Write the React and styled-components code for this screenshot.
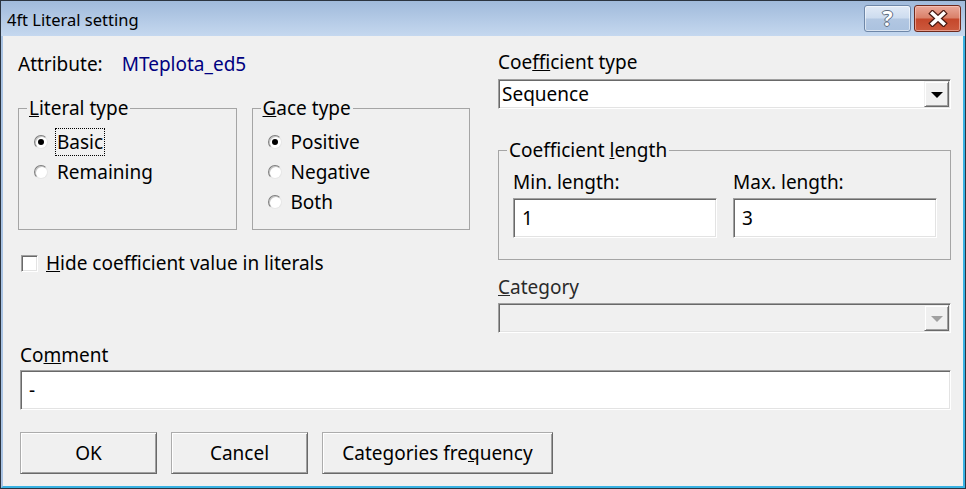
import React from "react";
import styled, { createGlobalStyle, css } from "styled-components";

const FONT = `"Noto Sans", "Open Sans", "DejaVu Sans", sans-serif`;

const Global = createGlobalStyle`
  html, body { margin: 0; padding: 0; background: #ffffff; }
  * { box-sizing: border-box; }
`;

const sunken = css`
  border: 1px solid;
  border-color: #a0a0a0 #ffffff #ffffff #a0a0a0;
  box-shadow: inset 1px 1px 0 #696969, inset -1px -1px 0 #e3e3e3;
`;

const raised = css`
  border: 1px solid;
  border-color: #acacac #696969 #696969 #acacac;
  box-shadow: inset 1px 1px 0 #ffffff, inset -1px -1px 0 #a0a0a0;
`;

const Window = styled.div`
  width: 966px;
  height: 489px;
  border: 1px solid #2b3440;
  display: flex;
  flex-direction: column;
  font-family: ${FONT};
  font-size: 19px;
  color: #000;
  overflow: hidden;
`;

const TitleBar = styled.div`
  height: 35px;
  flex: none;
  display: flex;
  align-items: flex-start;
  padding: 0 4px 0 6px;
  background: linear-gradient(#a0badb, #c5d8ef);
`;

const TitleText = styled.div`
  font-size: 16.5px;
  line-height: 24px;
  margin-top: 7px;
`;

const Caps = styled.div`
  margin-left: auto;
  margin-top: 4px;
  display: flex;
  gap: 3px;
`;

const CapButton = styled.div`
  width: 47px;
  height: 27px;
  border-radius: 3px;
  display: flex;
  align-items: center;
  justify-content: center;
  ${(p) =>
    p.$close
      ? css`
          border: 1px solid #6e2a1d;
          background: linear-gradient(#eaa899, #d98069 48%, #c5472b 52%, #cc5a3e);
          box-shadow: inset 0 0 0 1px rgba(255, 210, 200, 0.55);
        `
      : css`
          border: 1px solid #6e87a8;
          background: linear-gradient(#e1eaf6, #cddcef 48%, #b2c7e2 52%, #abc2df);
          box-shadow: inset 0 0 0 1px rgba(255, 255, 255, 0.55);
        `}
`;

const HelpGlyph = styled.span`
  font-family: ${FONT};
  font-weight: 700;
  font-size: 21px;
  line-height: 1;
  color: #ffffff;
  text-shadow: -1px 0 #5d6b7e, 1px 0 #5d6b7e, 0 -1px #5d6b7e, 0 1px #5d6b7e;
`;

const Frame = styled.div`
  flex: 1;
  min-height: 0;
  display: flex;
  border-left: 2px solid #a9c3e3;
  border-right: 2px solid #39b2e3;
  border-bottom: 2px solid #39b2e3;
`;

const Body = styled.div`
  flex: 1;
  background: #f0f0f0;
  padding: 14px 12px 0 15px;
  display: flex;
  flex-direction: column;
`;

const Top = styled.div`
  display: grid;
  grid-template-columns: 452px 1fr;
  column-gap: 28px;
  align-items: start;
`;

const Column = styled.div`
  display: flex;
  flex-direction: column;
`;

const AttrRow = styled.div`
  margin-top: 2px;
  display: flex;
  gap: 19px;
  line-height: 24px;
`;

const AttrValue = styled.span`
  color: #000080;
`;

const GroupRow = styled.div`
  margin-top: 20px;
  display: grid;
  grid-template-columns: 1fr 1fr;
  column-gap: 15px;
`;

const Group = styled.fieldset`
  margin: ${(p) => p.$mt || 0}px 0 0 0;
  min-width: 0;
  height: ${(p) => p.$h}px;
  border: 1px solid #a5a5a5;
  padding: ${(p) => p.$pt}px ${(p) => p.$pr || 0}px 0 8px;
`;

const Legend = styled.legend`
  padding: 0 2px;
  line-height: 24px;
`;

const RadioList = styled.div`
  display: flex;
  flex-direction: column;
  padding-left: 7px;
`;

const RadioRow = styled.div`
  height: 30px;
  display: flex;
  align-items: center;
  gap: 9px;
`;

const RadioMark = styled.span`
  width: 14px;
  height: 14px;
  flex: none;
  border-radius: 50%;
  background: #fff;
  border: 1px solid;
  border-color: #7e7e7e #e6e6e6 #e6e6e6 #7e7e7e;
  box-shadow: inset 1px 1px 0 #c4c4c4;
  display: flex;
  align-items: center;
  justify-content: center;
  &::after {
    content: "";
    width: 6px;
    height: 6px;
    border-radius: 50%;
    background: #000;
    display: ${(p) => (p.$on ? "block" : "none")};
  }
`;

const RadioLabel = styled.span`
  line-height: 26px;
  padding: 0 1px;
  margin-left: -1px;
  outline: ${(p) => (p.$focus ? "1px dotted #000" : "none")};
`;

const CheckRow = styled.div`
  margin-top: 21px;
  height: 24px;
  display: flex;
  align-items: center;
  gap: 8px;
  line-height: 24px;
`;

const CheckBox = styled.span`
  width: 17px;
  height: 17px;
  margin-left: 3px;
  background: #fff;
  ${sunken};
`;

const Label = styled.div`
  line-height: 24px;
  margin-top: ${(p) => p.$mt || 0}px;
  margin-left: ${(p) => p.$ml || 0}px;
  color: ${(p) => (p.$dim ? "#2a2a2a" : "#000")};
`;

const Select = styled.div`
  margin-top: ${(p) => p.$mt}px;
  height: 30px;
  display: flex;
  align-items: stretch;
  padding: 1px 1px 1px 3px;
  background: ${(p) => (p.$disabled ? "#f0f0f0" : "#ffffff")};
  ${sunken};
`;

const SelectText = styled.span`
  flex: 1;
  line-height: 26px;
`;

const DropButton = styled.span`
  width: 25px;
  flex: none;
  background: #f0f0f0;
  display: flex;
  align-items: center;
  justify-content: center;
  ${raised};
  border-color: #f0f0f0 #696969 #696969 #f0f0f0;
`;

const Arrow = styled.span`
  width: 0;
  height: 0;
  border-left: 6px solid transparent;
  border-right: 6px solid transparent;
  border-top: 6px solid ${(p) => (p.$disabled ? "#a0a0a0" : "#000")};
  margin-top: 1px;
`;

const LengthGrid = styled.div`
  display: grid;
  grid-template-columns: 1fr 1fr;
  column-gap: 16px;
  padding-left: 6px;
`;

const TextBox = styled.div`
  margin-top: ${(p) => p.$mt || 0}px;
  margin-left: ${(p) => p.$ml || 0}px;
  height: 40px;
  background: #ffffff;
  padding: 0 8px;
  display: flex;
  align-items: center;
  line-height: 24px;
  ${sunken};
`;

const ButtonRow = styled.div`
  margin-top: 22px;
  margin-left: 2px;
  display: flex;
  gap: 14px;
`;

const Button = styled.div`
  width: ${(p) => p.$w}px;
  height: 42px;
  background: #f0f0f0;
  display: flex;
  align-items: center;
  justify-content: center;
  line-height: 24px;
  ${raised};
`;

function Radio({ on, focus, children }) {
  return (
    <RadioRow>
      <RadioMark $on={on} />
      <RadioLabel $focus={focus}>{children}</RadioLabel>
    </RadioRow>
  );
}

function Combo({ mt, disabled, children }) {
  return (
    <Select $mt={mt} $disabled={disabled}>
      <SelectText>{children}</SelectText>
      <DropButton>
        <Arrow $disabled={disabled} />
      </DropButton>
    </Select>
  );
}

export default function App() {
  return (
    <>
      <Global />
      <Window>
        <TitleBar>
          <TitleText>4ft Literal setting</TitleText>
          <Caps>
            <CapButton>
              <HelpGlyph>?</HelpGlyph>
            </CapButton>
            <CapButton $close>
              <svg width="20" height="17" viewBox="0 0 20 17">
                <path d="M4.5 3.5 L15.5 13.5 M15.5 3.5 L4.5 13.5" stroke="#4a1a12" strokeWidth="6" strokeLinecap="square" />
                <path d="M4.5 3.5 L15.5 13.5 M15.5 3.5 L4.5 13.5" stroke="#ffffff" strokeWidth="3.6" strokeLinecap="square" />
              </svg>
            </CapButton>
          </Caps>
        </TitleBar>
        <Frame>
          <Body>
            <Top>
              <Column>
                <AttrRow>
                  <span>Attribute:</span>
                  <AttrValue>MTeplota_ed5</AttrValue>
                </AttrRow>
                <GroupRow>
                  <Group $h={134} $pt={7}>
                    <Legend>
                      <u>L</u>iteral type
                    </Legend>
                    <RadioList>
                      <Radio on focus>Basic</Radio>
                      <Radio>Remaining</Radio>
                    </RadioList>
                  </Group>
                  <Group $h={134} $pt={7}>
                    <Legend>
                      <u>G</u>ace type
                    </Legend>
                    <RadioList>
                      <Radio on>Positive</Radio>
                      <Radio>Negative</Radio>
                      <Radio>Both</Radio>
                    </RadioList>
                  </Group>
                </GroupRow>
                <CheckRow>
                  <CheckBox />
                  <span>
                    <u>H</u>ide coefficient value in literals
                  </span>
                </CheckRow>
              </Column>
              <Column>
                <Label>
                  Coe<u>f</u>ficient type
                </Label>
                <Combo mt={5}>Sequence</Combo>
                <Group $mt={29} $h={122} $pt={8} $pr={13}>
                  <Legend>
                    Coefficient <u>l</u>ength
                  </Legend>
                  <LengthGrid>
                    <div>
                      <Label>Min. length:</Label>
                      <TextBox $mt={4}>1</TextBox>
                    </div>
                    <div>
                      <Label>Max. length:</Label>
                      <TextBox $mt={4}>3</TextBox>
                    </div>
                  </LengthGrid>
                </Group>
                <Label $mt={15} $dim>
                  <u>C</u>ategory
                </Label>
                <Combo mt={4} disabled />
              </Column>
            </Top>
            <Label $mt={10} $ml={2}>
              Co<u>m</u>ment
            </Label>
            <TextBox $mt={3} $ml={2}>-</TextBox>
            <ButtonRow>
              <Button $w={137}>OK</Button>
              <Button $w={137}>Cancel</Button>
              <Button $w={231}>
                Categories fre<u>q</u>uency
              </Button>
            </ButtonRow>
          </Body>
        </Frame>
      </Window>
    </>
  );
}
